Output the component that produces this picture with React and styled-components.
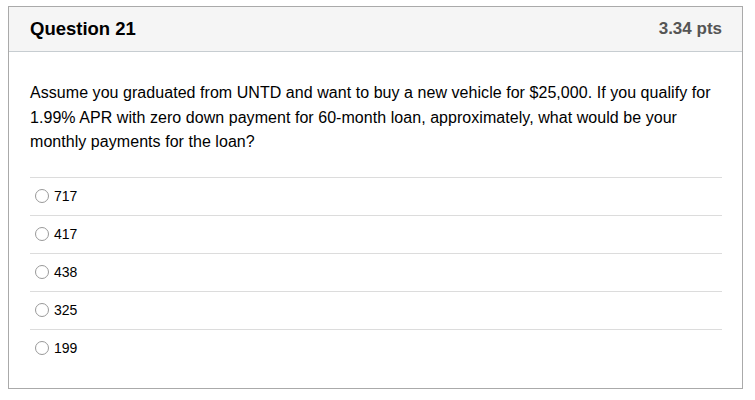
import React from "react";
import styled, { createGlobalStyle } from "styled-components";

const GlobalStyle = createGlobalStyle`
  body {
    margin: 0;
    background: #fff;
    font-family: "Liberation Sans", Arial, Helvetica, sans-serif;
    color: #2d3b45;
  }
`;

const Card = styled.div`
  margin: 6px 0 0 8px;
  width: 735px;
  box-sizing: border-box;
  border: 1px solid #aaaaaa;
  background: #fff;
`;

const Header = styled.div`
  height: 44px;
  display: flex;
  align-items: center;
  justify-content: space-between;
  padding: 0 20px 0 21px;
  background: #f5f5f5;
  border-bottom: 1px solid #c7cdd1;
`;

const Title = styled.h2`
  margin: 0;
  font-size: 18.5px;
  font-weight: bold;
  color: #000;
`;

const Points = styled.span`
  font-size: 17px;
  font-weight: bold;
  color: #555;
`;

const Body = styled.div`
  padding: 29px 20px 21px 21px;
`;

const Prompt = styled.p`
  margin: 0 0 22px;
  font-size: 16px;
  line-height: 24.5px;
  letter-spacing: 0.05px;
  color: #000;
`;

const Answers = styled.div`
  display: flex;
  flex-direction: column;
`;

const Answer = styled.label`
  height: 37px;
  display: flex;
  align-items: center;
  gap: 5px;
  padding-left: 5px;
  border-top: 1px solid #dcdcdc;
  font-size: 14px;
  color: #000;
`;

const Radio = styled.span`
  width: 12px;
  height: 12px;
  border-radius: 50%;
  border: 1px solid #999;
  background: #fff;
  flex-shrink: 0;
`;

const options = ["717", "417", "438", "325", "199"];

export default function App() {
  return (
    <>
      <GlobalStyle />
      <Card>
        <Header>
          <Title>Question 21</Title>
          <Points>3.34 pts</Points>
        </Header>
        <Body>
          <Prompt>
            Assume you graduated from UNTD and want to buy a new vehicle for $25,000. If you qualify for
            1.99% APR with zero down payment for 60-month loan, approximately, what would be your
            monthly payments for the loan?
          </Prompt>
          <Answers>
            {options.map(o => (
              <Answer key={o}>
                <Radio />
                {o}
              </Answer>
            ))}
          </Answers>
        </Body>
      </Card>
    </>
  );
}
